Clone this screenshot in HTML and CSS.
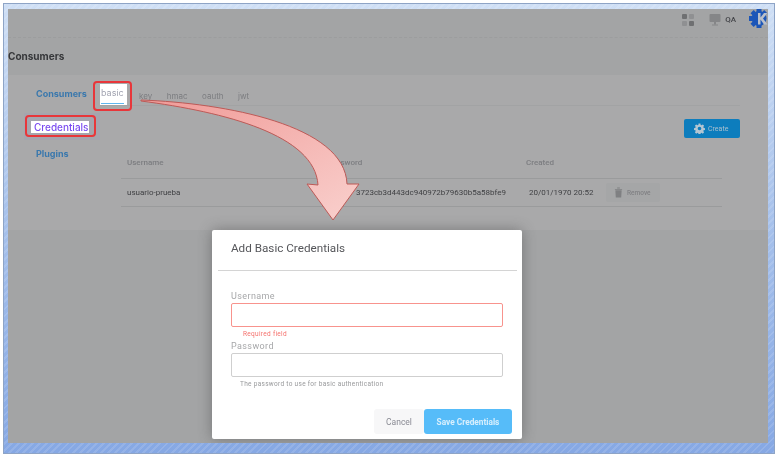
FILE: index.html
```html
<!DOCTYPE html>
<html lang="en">
<head>
  <meta charset="UTF-8" />
  <title>Consumers</title>
  <link rel="stylesheet" href="styles.css">
</head>
<body>
  <div class="frame">
    <div class="screen">
      <div class="page">
        <div class="topbar">
          <svg class="icon-grid" viewBox="0 0 12 12" width="12" height="12">
            <rect x="0" y="0" width="5" height="5" rx="1" fill="#6f7072"/>
            <rect x="7" y="0" width="5" height="5" rx="1" fill="#8f9092"/>
            <rect x="0" y="7" width="5" height="5" rx="1" fill="#8f9092"/>
            <rect x="7" y="7" width="5" height="5" rx="1" fill="#6f7072"/>
          </svg>
          <svg class="icon-monitor" viewBox="0 0 12 12" width="12" height="12">
            <rect x="0.5" y="0" width="11" height="8" rx="1" fill="#858688"/>
            <rect x="5" y="8" width="2" height="2.5" fill="#858688"/>
            <rect x="3" y="10.5" width="6" height="1" fill="#858688"/>
          </svg>
          <span class="env">QA</span>
          <svg class="logo" viewBox="0 0 19 21" width="19" height="21">
            <circle cx="10" cy="10.5" r="7.5" fill="#1c56b8"/>
            <g fill="#1c56b8">
              <rect x="7.5" y="1" width="5" height="4"/>
              <rect x="7.5" y="16" width="5" height="4"/>
              <rect x="0" y="8" width="4" height="5"/>
              <rect x="2.5" y="3" width="4.5" height="4.5" transform="rotate(45 4.7 5.2)"/>
              <rect x="2.5" y="13.5" width="4.5" height="4.5" transform="rotate(45 4.7 15.7)"/>
              <rect x="13" y="3" width="4.5" height="4.5" transform="rotate(45 15.2 5.2)"/>
            </g>
            <path d="M9 5h2.5v4.500l3.500-4.500h3.500l-4.500 5.500 4.500 6h-3.500l-3.500-5v5h-2.500z" fill="#b9bfca"/>
          </svg>
        </div>
        <div class="titlebar">Consumers</div>
        <div class="panel">
          <nav class="side">
            <a class="side-item">Consumers</a>
            <a class="side-item is-active"><span>Credentials</span></a>
            <a class="side-item">Plugins</a>
          </nav>
          <div class="main">
            <div class="tabs">
              <span class="tab is-active">basic</span>
              <span class="tab">key</span>
              <span class="tab">hmac</span>
              <span class="tab">oauth</span>
              <span class="tab">jwt</span>
            </div>
            <div class="toolbar">
              <button class="btn-create">
                <svg viewBox="0 0 24 24" width="11" height="11"><path fill="#b4c6d2" fill-rule="evenodd" d="M10 1h4l.6 3.200 1.900.8 2.700-1.800 2.800 2.800-1.800 2.700.8 1.900 3 .6v4l-3 .6-.8 1.900 1.800 2.700-2.800 2.800-2.700-1.800-1.900.8-.6 3h-4l-.6-3-1.900-.8-2.700 1.800-2.800-2.800 1.800-2.700-.8-1.900-3-.6v-4l3-.6.8-1.900-1.800-2.700 2.800-2.800 2.700 1.800 1.900-.8zM12 8a4 4 0 1 0 0 8 4 4 0 0 0 0-8z"/></svg>
                Create
              </button>
            </div>
            <div class="table">
              <div class="row row-head">
                <span>Username</span>
                <span>Password</span>
                <span>Created</span>
                <span></span>
              </div>
              <div class="row">
                <span>usuario-prueba</span>
                <span class="hash">3723cb3d443dc940972b79630b5a58bfe9</span>
                <span class="date">20/01/1970 20:52</span>
                <span>
                  <button class="btn-remove">
                    <svg viewBox="0 0 10 12" width="9" height="11"><path fill="#7f8082" d="M1 2h8v1h-8zM3.500 .5h3v1h-3zM1.500 3.500h7l-.5 8h-6z"/></svg>
                    Remove
                  </button>
                </span>
              </div>
            </div>
          </div>
        </div>
      </div>

      <div class="mark mark-tab"></div>
      <div class="mark mark-nav"></div>

      <svg class="arrow" viewBox="8 9 760 434" width="760" height="434">
        <defs>
          <linearGradient id="arrowFill" x1="0" y1="0" x2="1" y2="1">
            <stop offset="0" stop-color="#f09a97"/>
            <stop offset="1" stop-color="#f9d0cd"/>
          </linearGradient>
        </defs>
        <path fill="url(#arrowFill)" stroke="#bd5a57" stroke-width="1"
          d="M141 100 C225 103 345 125 347 184 L359 184 L333 220 L307 184 L318 185 C315 135 225 112 141 101 Z"/>
      </svg>

      <div class="modal">
        <div class="modal-head">Add Basic Credentials</div>
        <form class="modal-form">
          <label class="field-label">Username</label>
          <div class="field field-error"></div>
          <div class="field-note note-error">Required field</div>
          <label class="field-label">Password</label>
          <div class="field"></div>
          <div class="field-note note-help">The password to use for basic authentication</div>
        </form>
        <div class="modal-foot">
          <button class="btn-cancel">Cancel</button>
          <button class="btn-save">Save Credentials</button>
        </div>
      </div>
    </div>
  </div>
</body>
</html>
```

FILE: styles.css
```css
:root {
  --page: #a3a4a5;
  --panel: #a9a9aa;
  --line: #9a9b9c;
  --link: #3a78ad;
  --muted: #7c7d80;
  --text: #404144;
}

* {
  box-sizing: border-box;
}

html, body {
  margin: 0;
  height: 100%;
  overflow: hidden;
  background: #fff;
}

body {
  padding: 3px 0 0 3px;
  font-family: Roboto, "Liberation Sans", sans-serif;
}

.frame {
  width: 772px;
  height: 451px;
  padding: 5px 6px 10px 4px;
  border: 1px solid #8ea4c6;
  background:
    repeating-linear-gradient(135deg, rgba(255,255,255,.12) 0 2px, rgba(255,255,255,0) 2px 5px),
    linear-gradient(180deg, #cfdff5 0%, #a9c3ec 45%, #86a8e4 100%);
}

.screen {
  position: relative;
  width: 760px;
  height: 434px;
  overflow: hidden;
  background: var(--page);
}

.page {
  filter: blur(.6px);
}

/* top bars */
.topbar {
  display: flex;
  align-items: center;
  justify-content: flex-end;
  height: 29px;
  border-bottom: 1px dashed #9c9d9e;
}

.icon-grid {
  margin-right: 15px;
  margin-top: -6px;
}

.icon-monitor {
  margin-right: 4px;
  margin-top: -6px;
}

.env {
  margin-right: 13px;
  margin-top: -8px;
  font-size: 8px;
  font-weight: 500;
  color: #45464a;
}

.logo {
  margin-top: -9px;
  flex: none;
}

.titlebar {
  display: flex;
  align-items: center;
  height: 35px;
  font-family: Inter, sans-serif;
  font-size: 10px;
  font-weight: 700;
  color: #36373a;
}

/* panel */
.panel {
  display: flex;
  height: 155px;
  margin-top: 2px;
  background: var(--panel);
}

.side {
  display: flex;
  flex-direction: column;
  width: 92px;
  padding-top: 5px;
}

.side-item {
  display: flex;
  align-items: center;
  height: 27px;
  padding-left: 28px;
  font-family: Inter, sans-serif;
  font-size: 9px;
  font-weight: 700;
  color: var(--link);
}

.side-item.is-active {
  margin: 6px 0 0 16px;
  padding-left: 7px;
  background: #a5a5ae;
  font-size: 10px;
  font-weight: 500;
  color: #7a4bf0;
}

.side-item.is-active span {
  padding: 0 1px 0 3px;
  background: #fff;
  line-height: 12px;
}

.main {
  width: 640px;
}

.tabs {
  display: flex;
  align-items: flex-end;
  height: 21px;
  margin-top: 10px;
  padding-bottom: 4px;
  border-bottom: 1px solid #a2a3a4;
  font-family: Inter, sans-serif;
  font-size: 8px;
  color: var(--muted);
}

.tab {
  margin-right: 14.5px;
}

.tab.is-active {
  display: flex;
  align-items: center;
  width: 27px;
  height: 21px;
  margin: 0 12px -4px 0;
  padding: 0 0 4px 1px;
  background: linear-gradient(#5fb6ef, #5fb6ef) no-repeat 1px 19px / 23px 1px, #fff;
  font-size: 9px;
  color: #a3a5b2;
}

.toolbar {
  display: flex;
  justify-content: flex-end;
  height: 19px;
  margin-top: 13px;
}

.btn-create {
  display: flex;
  align-items: center;
  gap: 3px;
  width: 56px;
  height: 19px;
  padding: 0 0 0 10px;
  border: 0;
  border-radius: 2px;
  background: #0d7dbd;
  font-family: inherit;
  font-size: 7px;
  color: #a9c0cf;
}

.table {
  width: 601px;
  margin-left: 21px;
}

.row {
  display: grid;
  grid-template-columns: 206px 199px 80px 116px;
  align-items: center;
  height: 28px;
  border-bottom: 1px solid var(--line);
  font-size: 8px;
  color: var(--text);
}

.row span:first-child {
  padding-left: 6px;
}

.row-head {
  height: 41px;
  padding-top: 8px;
  color: var(--muted);
  font-weight: 500;
}

.hash {
  padding-right: 20px;
  text-align: right;
  white-space: nowrap;
}

.row .date {
  padding-left: 3px;
}

.btn-remove {
  display: flex;
  align-items: center;
  gap: 4px;
  width: 54px;
  height: 19px;
  padding: 0 0 0 8px;
  border: 0;
  border-radius: 2px;
  background: #a5a6a7;
  font-family: inherit;
  font-size: 6.5px;
  font-weight: 500;
  color: #808184;
}

/* annotation boxes */
.mark {
  position: absolute;
  border: 2px solid #e8363a;
  border-radius: 4px;
}

.mark-tab {
  left: 85px;
  top: 72px;
  width: 39px;
  height: 30px;
}

.mark-nav {
  left: 17px;
  top: 106px;
  width: 71px;
  height: 22px;
}

.arrow {
  position: absolute;
  left: 0;
  top: 0;
}

/* dialog */
.modal {
  position: absolute;
  left: 204px;
  top: 221px;
  display: flex;
  flex-direction: column;
  width: 310px;
  height: 209px;
  border-radius: 2px;
  background: #fff;
  box-shadow: 0 0 14px rgba(60, 60, 60, .45);
  filter: blur(.4px);
}

.modal-head {
  display: flex;
  align-items: center;
  height: 41px;
  margin: 0 5px 0 6px;
  padding: 0 0 4px 13px;
  border-bottom: 1px solid #d4d4d4;
  font-size: 11.7px;
  color: #55565a;
}

.modal-form {
  padding: 20px 19px 0;
}

.field-label {
  display: block;
  height: 10px;
  font-size: 9px;
  line-height: 10px;
  letter-spacing: .4px;
  color: #a6a7a9;
}

.field {
  width: 272px;
  height: 24px;
  margin-top: 2px;
  border: 1px solid #cfcfcf;
  border-radius: 2px;
}

.field-error {
  border-color: #f8938d;
}

.field-note {
  height: 9px;
  margin-top: 3px;
  font-size: 6.5px;
  line-height: 9px;
  letter-spacing: .3px;
}

.note-error {
  margin-bottom: 2px;
  padding-left: 12px;
  color: #f5716d;
}

.note-help {
  padding-left: 9px;
  color: #98999b;
}

.modal-foot {
  display: flex;
  justify-content: flex-end;
  margin-top: auto;
  padding: 0 10px 5px 0;
}

.modal-foot button {
  height: 25px;
  border: 0;
  font-family: inherit;
  border-radius: 3px;
}

.btn-cancel {
  width: 50px;
  background: #f7f7f8;
  font-size: 8.5px;
  color: #8a8b94;
}

.btn-save {
  width: 88px;
  background: #56bcf9;
  font-size: 8.3px;
  font-weight: 700;
  color: #d8effd;
}
```
